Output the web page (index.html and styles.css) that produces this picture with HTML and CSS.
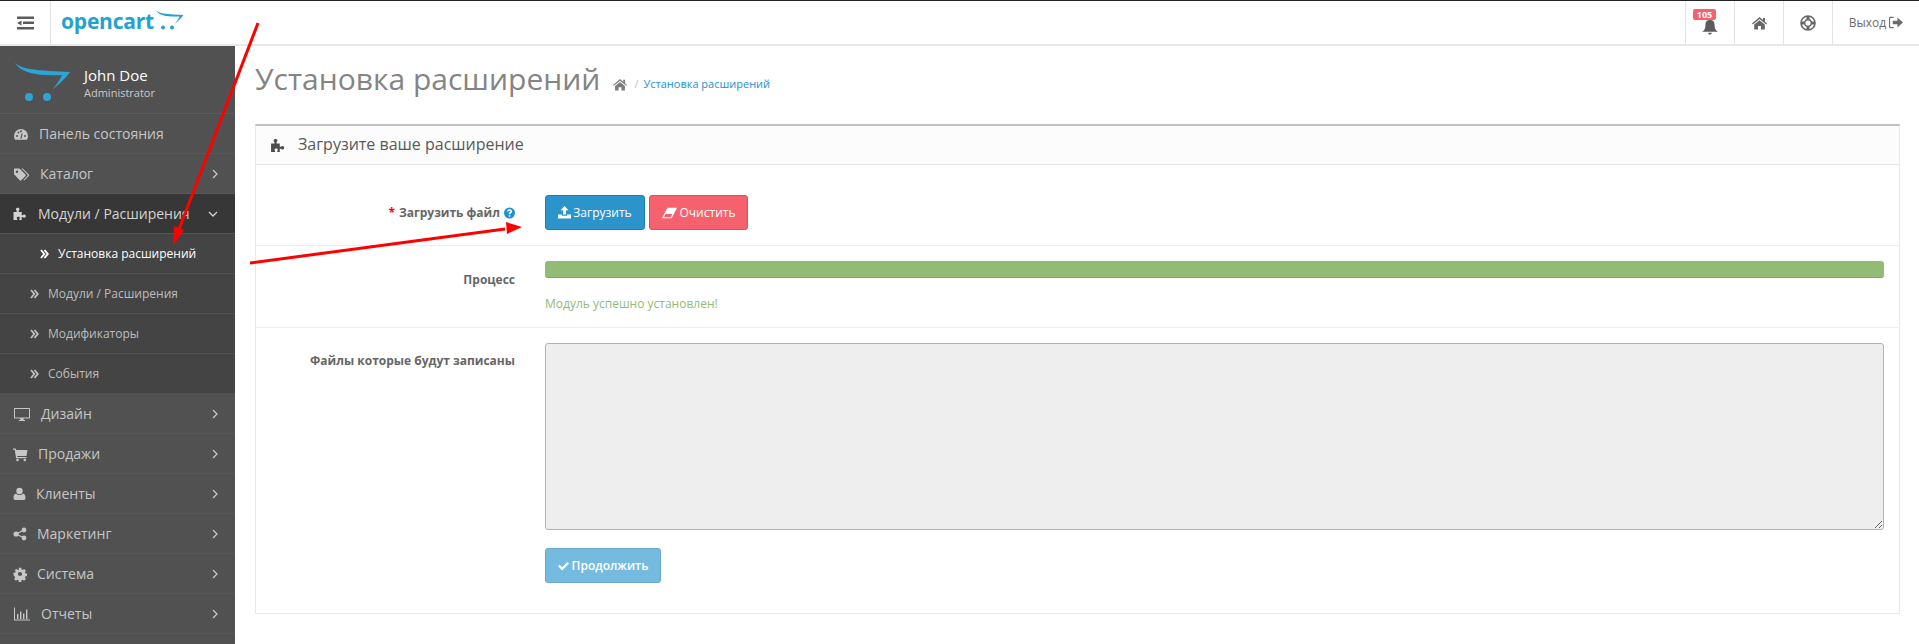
FILE: index.html
```html
<!DOCTYPE html>
<html lang="ru">
<head>
<meta charset="utf-8">
<title>Установка расширений</title>
<link rel="stylesheet" href="styles.css">
</head>
<body>
<svg class="defs" aria-hidden="true">
  <symbol id="cart-logo" viewBox="15 62 56 40"><path d="M15 63C22 69 35 70 50 71L70 72C66 78 58 85 52 90C56 85 60 80 62 75C40 76 22 74 15 63Z"/><circle cx="29" cy="97" r="4"/><circle cx="47" cy="97" r="4"/></symbol>
  <symbol id="i-dash" viewBox="0 0 14 16"><path fill-rule="evenodd" d="M7 3a7 7 0 0 0-7 7c0 1.500.4 2.800 1 3.800h12c.6-1 1-2.300 1-3.800a7 7 0 0 0-7-7zM3 9a1 1 0 1 1 0 2 1 1 0 0 1 0-2zM4.500 5.500a1 1 0 1 1 0 2 1 1 0 0 1 0-2zM7 4.300a1 1 0 1 1 0 2 1 1 0 0 1 0-2zM11 9a1 1 0 1 1 0 2 1 1 0 0 1 0-2zM6.300 12.500l1.500-5.500.8.200-1 5.300z"/></symbol>
  <symbol id="i-tags" viewBox="0 0 15 16"><path fill-rule="evenodd" d="M0 2.500h5.500l6 6c.5.500.5 1 0 1.500l-4.300 4.300c-.5.500-1 .5-1.500 0l-5.700-6zM3 4.500a1.200 1.200 0 1 0 0 2.400 1.200 1.200 0 0 0 0-2.400z"/><path d="M7.500 2.500h1.300l6 6c.5.500.5 1 0 1.500l-4.500 4.500-.9-.5 4-4c.5-.5.5-1 0-1.500z"/></symbol>
  <symbol id="i-puzzle" viewBox="0 0 14 16"><path d="M0 6h3.200V4.800C2.500 4.300 2.400 3.800 2.400 3.300c0-1 .9-1.500 1.800-1.500s1.800.5 1.800 1.500c0 .5-.2 1-.8 1.500V6h3v3.200h1c.4-.6.9-.8 1.500-.8 1 0 1.600.8 1.600 1.700s-.6 1.700-1.600 1.700c-.6 0-1.100-.2-1.500-.8h-1V14H5.800v-1c.4-.4.5-.7.5-1.100 0-.7-.7-1.100-1.500-1.100s-1.500.4-1.500 1.100c0 .4.1.7.5 1.100v1H0z"/></symbol>
  <symbol id="i-desktop" viewBox="0 0 16 16"><path fill-rule="evenodd" d="M1 2h14c.6 0 1 .4 1 1v8.500c0 .6-.4 1-1 1H9.500l.3 1.500h1.200v1H5v-1h1.200l.3-1.500H1c-.6 0-1-.4-1-1V3c0-.6.4-1 1-1zM1 3v8.500h14V3z"/></symbol>
  <symbol id="i-cart" viewBox="0 0 15 16"><path d="M0 2.500h2.800l.3 1.500h11.400l-1 6H4.200l.2 1h9v1.300H3.100L1.700 3.800H0z"/><circle cx="4.500" cy="14" r="1.300"/><circle cx="11.800" cy="14" r="1.300"/></symbol>
  <symbol id="i-user" viewBox="0 0 12 16"><circle cx="6" cy="5" r="3.200"/><path d="M0 12c0-3 1-4.300 2.500-4.300C3.500 8.500 4.700 9 6 9s2.500-.5 3.500-1.300C11 7.700 12 9 12 12c0 1.500-1 2-2 2H2c-1 0-2-.5-2-2z"/></symbol>
  <symbol id="i-share" viewBox="0 0 13 16"><circle cx="10.500" cy="4" r="2.400"/><circle cx="10.500" cy="12" r="2.400"/><circle cx="2.600" cy="8" r="2.600"/><path d="M2.600 8l8-4M2.600 8l8 4" stroke="currentColor" stroke-width="1.300" fill="none"/></symbol>
  <symbol id="i-cog" viewBox="0 0 13 16"><path fill-rule="evenodd" d="M5.200 2h2.600l.3 1.800 1 .4 1.500-1 1.800 1.800-1 1.500.4 1 1.800.3v2.600l-1.800.3-.4 1 1 1.500-1.800 1.800-1.500-1-1 .4-.3 1.800H5.200l-.3-1.800-1-.4-1.500 1-1.800-1.800 1-1.500-.4-1L0 9.600V7l1.800-.3.4-1-1-1.500L3 3.400l1.500 1 1-.4zM6.500 6.200a2.100 2.100 0 1 0 0 4.200 2.100 2.100 0 0 0 0-4.200z" transform="translate(0 -.3)"/></symbol>
  <symbol id="i-chart" viewBox="0 0 16 16"><path d="M0 1.500h1v12h15v1H0zM3 8h1.400v5H3zM6 5.500h1.400V13H6zM9 7.500h1.400V13H9zM12 3.500h1.400V13H12z"/></symbol>
  <symbol id="i-right" viewBox="0 0 6 10"><path d="M1 1l4 4-4 4" fill="none" stroke="currentColor" stroke-width="1.300"/></symbol>
  <symbol id="i-down" viewBox="0 0 10 6"><path d="M1 1l4 4 4-4" fill="none" stroke="currentColor" stroke-width="1.300"/></symbol>
  <symbol id="i-dbl" viewBox="0 0 9 10"><path d="M1 1l3.300 4L1 9M4.500 1L7.800 5 4.500 9" fill="none" stroke="currentColor" stroke-width="1.900"/></symbol>
  <symbol id="i-bars" viewBox="0 0 17 14"><path d="M0 .5h17v2.500H0zM6 5.500h11V8H6zM0 11h17v2.500H0zM4.500 4.500v5L0 7z"/></symbol>
  <symbol id="i-bell" viewBox="0 0 15 16"><path d="M7.500 1c.5 0 .9.300.9.800 2.300.4 3.400 2.100 3.400 4.700 0 3.500 1 5 3.200 6.500H0c2.200-1.500 3.200-3 3.200-6.500 0-2.600 1.100-4.300 3.400-4.700 0-.5.400-.8.900-.8zM5.800 13.800h3.400c0 1-.7 1.700-1.700 1.700s-1.700-.7-1.700-1.700z"/></symbol>
  <symbol id="i-home" viewBox="0 0 15 14"><path d="M7.500 1L11 4V2h2v3.800l2 1.700-.8.900L7.500 3 .8 8.400 0 7.500zM2.200 8.500L7.500 4.200l5.300 4.300V13.500H9V10H6v3.500H2.200z"/></symbol>
  <symbol id="i-life" viewBox="0 0 16 16"><g fill="none" stroke="currentColor"><circle cx="8" cy="8" r="7" stroke-width="1.600"/><circle cx="8" cy="8" r="3.300" stroke-width="1.400"/><path stroke-width="3" d="M8 1v3.500M8 11.500V15M1 8h3.500M11.500 8H15"/></g></symbol>
  <symbol id="i-out" viewBox="0 0 15 14"><path d="M5 1.500H2C1 1.500.5 2 .5 3v8c0 1 .5 1.500 1.500 1.500h3" fill="none" stroke="currentColor" stroke-width="1.300"/><path d="M4 5h5V1.500L15 7l-6 5.500V9H4z"/></symbol>
  <symbol id="i-help" viewBox="0 0 12 12"><path fill-rule="evenodd" d="M6 0a6 6 0 1 1 0 12A6 6 0 0 1 6 0zM5.100 8.500v1.500h1.800V8.500zM6 2C4.600 2 3.600 2.700 3.300 4l1.400.6C4.900 3.900 5.300 3.500 6 3.500c.6 0 1 .3 1 .8 0 .4-.3.700-.8 1-.7.400-1.100.9-1.100 1.700v.3h1.800c0-.5.200-.7.700-1 .8-.5 1.200-1.100 1.200-2C8.800 2.900 7.500 2 6 2z"/></symbol>
  <symbol id="i-upload" viewBox="0 0 13 13"><path d="M6.500 0l4 4.300H8v4.200H5V4.300H2.500zM0 8.500h3.800v1.300h5.400V8.500H13v4H0z"/></symbol>
  <symbol id="i-eraser" viewBox="0 0 14 11"><path fill-rule="evenodd" d="M5 .5h9L9 10.500H0zM3.100 6.500L1.900 9.500h6.300l1.500-3z"/></symbol>
  <symbol id="i-check" viewBox="0 0 12 10"><path d="M1.800 3.600L4.500 6.300 10.200.6 12 2.400 4.500 9.900 0 5.400z"/></symbol>
</svg>

<header class="topbar">
  <div class="menu-toggle"><svg class="ic-bars"><use href="#i-bars"/></svg></div>
  <a class="logo"><span class="logo-text">opencart</span><svg class="logo-cart"><use href="#cart-logo"/></svg></a>
  <nav class="top-nav">
    <a class="top-item bell-item"><svg class="ic-bell"><use href="#i-bell"/></svg><span class="badge">105</span></a>
    <a class="top-item"><svg class="ic-home"><use href="#i-home"/></svg></a>
    <a class="top-item"><svg class="ic-life"><use href="#i-life"/></svg></a>
    <a class="top-item logout">Выход<svg class="ic-out"><use href="#i-out"/></svg></a>
  </nav>
</header>

<div class="layout">
  <aside class="sidebar">
    <div class="profile">
      <svg class="profile-cart"><use href="#cart-logo"/></svg>
      <div class="profile-text"><div class="profile-name">John Doe</div><div class="profile-role">Administrator</div></div>
    </div>
    <ul class="menu">
      <li class="item"><svg class="ico w16"><use href="#i-dash"/></svg>Панель состояния</li>
      <li class="item"><svg class="ico w17"><use href="#i-tags"/></svg>Каталог<svg class="chev"><use href="#i-right"/></svg></li>
      <li class="item active"><svg class="ico w15"><use href="#i-puzzle"/></svg>Модули / Расширения<svg class="chev-down"><use href="#i-down"/></svg></li>
      <li class="sub current"><svg class="dbl"><use href="#i-dbl"/></svg>Установка расширений</li>
      <li class="sub"><svg class="dbl"><use href="#i-dbl"/></svg>Модули / Расширения</li>
      <li class="sub"><svg class="dbl"><use href="#i-dbl"/></svg>Модификаторы</li>
      <li class="sub"><svg class="dbl"><use href="#i-dbl"/></svg>События</li>
      <li class="item"><svg class="ico w18"><use href="#i-desktop"/></svg>Дизайн<svg class="chev"><use href="#i-right"/></svg></li>
      <li class="item"><svg class="ico w15"><use href="#i-cart"/></svg>Продажи<svg class="chev"><use href="#i-right"/></svg></li>
      <li class="item"><svg class="ico w13"><use href="#i-user"/></svg>Клиенты<svg class="chev"><use href="#i-right"/></svg></li>
      <li class="item"><svg class="ico w14"><use href="#i-share"/></svg>Маркетинг<svg class="chev"><use href="#i-right"/></svg></li>
      <li class="item"><svg class="ico w14"><use href="#i-cog"/></svg>Система<svg class="chev"><use href="#i-right"/></svg></li>
      <li class="item"><svg class="ico w18"><use href="#i-chart"/></svg>Отчеты<svg class="chev"><use href="#i-right"/></svg></li>
    </ul>
  </aside>

  <main class="content">
    <div class="page-header">
      <h1 class="page-title">Установка расширений</h1>
      <svg class="ic-crumb"><use href="#i-home"/></svg>
      <span class="crumb-sep">/</span>
      <a class="crumb-link">Установка расширений</a>
    </div>
    <section class="panel">
      <div class="panel-head"><svg class="ic-panel"><use href="#i-puzzle"/></svg><span class="panel-title">Загрузите ваше расширение</span></div>
      <div class="panel-body">
        <div class="row">
          <div class="label label-mid"><span class="req">*</span> Загрузить файл <svg class="ic-help"><use href="#i-help"/></svg></div>
          <div class="field btns">
            <button class="btn btn-blue"><svg class="ic-upload"><use href="#i-upload"/></svg>Загрузить</button>
            <button class="btn btn-red"><svg class="ic-eraser"><use href="#i-eraser"/></svg>Очистить</button>
          </div>
        </div>
        <div class="row">
          <div class="label label-process">Процесс</div>
          <div class="field">
            <div class="progress"></div>
            <div class="success">Модуль успешно установлен!</div>
          </div>
        </div>
        <div class="row last">
          <div class="label label-files">Файлы которые будут записаны</div>
          <div class="field">
            <textarea class="files" disabled></textarea>
            <button class="btn btn-cont"><svg class="ic-check"><use href="#i-check"/></svg>Продолжить</button>
          </div>
        </div>
      </div>
    </section>
  </main>
</div>

<svg class="arrows" viewBox="0 0 1919 644" aria-hidden="true">
  <path class="arrow-line" d="M258 23L178 232"/>
  <polygon class="arrow-head" points="173,246 174,226 184,230"/>
  <path class="arrow-line" d="M250 263L505 229"/>
  <polygon class="arrow-head" points="522,227 506,222 507,234"/>
</svg>
</body>
</html>
```
FILE: styles.css
```css
* { box-sizing: border-box; }
html, body { margin: 0; padding: 0; }
body {
  position: relative;
  width: 1919px;
  height: 644px;
  overflow: hidden;
  background: #fff;
  color: #666;
  font: 12px/18px "Open Sans", "Liberation Sans", sans-serif;
}
svg { fill: currentColor; display: block; flex: none; }
.defs { position: absolute; width: 0; height: 0; }

.topbar {
  display: flex;
  align-items: center;
  height: 46px;
  border-top: 1px solid #222;
  border-bottom: 2px solid #e8e8e8;
  background: #fff;
}
.menu-toggle {
  width: 51px;
  height: 43px;
  display: flex;
  align-items: center;
  justify-content: center;
  border-right: 1px solid #e3e3e3;
  color: #5c5c5c;
}
.ic-bars { width: 17px; height: 14px; }
.logo { display: flex; align-items: center; margin-left: 10px; color: #23a1d1; }
.logo-text { font-size: 21px; line-height: 30px; font-weight: 700; letter-spacing: -0.2px; position: relative; top: -2px; }
.logo-cart { width: 28px; height: 20px; margin: -6px 0 0 2px; }
.top-nav { display: flex; margin-left: auto; height: 43px; }
.top-item {
  display: flex;
  align-items: center;
  justify-content: center;
  width: 49px;
  border-left: 1px solid #e3e3e3;
  color: #666;
}
.bell-item { position: relative; }
.logout { width: 87px; font-size: 12px; color: #6b6b6b; }
.ic-bell { width: 16px; height: 17px; margin-top: 7px; color: #5c5c5c; }
.ic-home { width: 15px; height: 14px; }
.ic-life { width: 16px; height: 16px; }
.ic-out { width: 14px; height: 13px; margin-left: 3px; }
.badge {
  position: absolute;
  left: 7px;
  top: 8px;
  width: 23px;
  height: 11px;
  border-radius: 2px;
  background: #f5616d;
  color: #fff;
  font-size: 9px;
  line-height: 11px;
  font-weight: 700;
  text-align: center;
}

.layout { display: flex; height: 598px; }
.sidebar { width: 235px; background: #515151; flex: none; color: #c6c6c6; }
.profile {
  display: flex;
  align-items: flex-start;
  height: 68px;
  padding: 16px 0 0 15px;
  border-bottom: 1px solid #5b5b5b;
}
.profile-cart { width: 56px; height: 40px; color: #2aa5d6; }
.profile-text { margin-left: 13px; }
.profile-name { color: #fff; font-size: 15px; line-height: 20px; margin-top: 3px; }
.profile-role { color: #c9c9c9; font-size: 11px; line-height: 13px; margin-top: 1px; }
.menu { list-style: none; margin: 0; padding: 0; }
.item, .sub {
  display: flex;
  align-items: center;
  height: 40px;
  border-bottom: 1px solid #585858;
  font-size: 14px;
}
.item { padding-left: 13px; }
.ico { height: 16px; margin-right: 10px; }
.w13 { width: 13px; } .w14 { width: 14px; } .w15 { width: 15px; }
.w16 { width: 16px; } .w17 { width: 17px; } .w18 { width: 18px; }
.chev { width: 6px; height: 10px; margin-left: auto; margin-right: 17px; }
.chev-down { width: 10px; height: 6px; margin-left: auto; margin-right: 17px; }
.active { background: #373737; color: #d4d4d4; border-bottom-color: #555; }
.sub {
  background: #444;
  border-bottom-color: #505050;
  font-size: 12px;
  padding-left: 30px;
  color: #bdbdbd;
}
.dbl { width: 9px; height: 10px; margin-right: 9px; }
.current { color: #fff; font-weight: 500; padding-left: 40px; }

.content { flex: 1; padding: 0 19px 0 20px; min-width: 0; }
.page-header { display: flex; align-items: flex-start; height: 78px; padding-top: 13px; }
.page-title { margin: 0; font-size: 30px; line-height: 40px; font-weight: 400; color: #848484; }
.ic-crumb { width: 14px; height: 13px; margin: 19px 0 0 13px; color: #7c7c7c; }
.crumb-sep { margin: 16px 0 0 7px; font-size: 11px; color: #bbb; }
.crumb-link { margin: 16px 0 0 5px; font-size: 11px; color: #1e91cf; }

.panel {
  border: 1px solid #e8e8e8;
  border-top: 2px solid #bfbfbf;
  height: 490px;
}
.panel-head {
  display: flex;
  align-items: center;
  height: 39px;
  padding-left: 15px;
  background: #fcfcfc;
  border-bottom: 1px solid #e8e8e8;
  color: #595959;
}
.panel-title { font-size: 16px; line-height: 20px; position: relative; top: -1px; }
.ic-panel { width: 15px; height: 17px; margin-right: 12px; color: #4d4d4d; }
.row { display: flex; gap: 30px; padding: 30px 15px 15px 0; border-bottom: 1px solid #eee; }
.row + .row { padding-top: 15px; }
.row.last { border-bottom: 0; }
.label { width: 259px; flex: none; text-align: right; font-weight: 700; color: #666; }
.label-mid { display: flex; align-items: center; justify-content: flex-end; gap: 4px; height: 35px; }
.label-process { padding-top: 10px; }
.label-files { padding-top: 9px; }
.req { color: #f00; }
.ic-help { width: 11px; height: 12px; color: #1e91cf; }
.field { flex: 1; min-width: 0; }
.btns { display: flex; gap: 4px; }
.btn {
  display: flex;
  align-items: center;
  justify-content: center;
  height: 35px;
  padding: 0;
  border-radius: 3px;
  border: 1px solid;
  color: #fff;
  font: 12px/18px "Open Sans", "Liberation Sans", sans-serif;
}
.btn-blue { width: 100px; background: #2b94cb; border-color: #1f7fb3; }
.btn-red { width: 99px; background: #f5616d; border-color: #e04f58; }
.btn-cont { width: 116px; margin-top: 18px; background: #75bbdf; border-color: #6aa9cb; font-weight: 600; }
.ic-upload { width: 13px; height: 13px; margin-right: 2px; }
.ic-eraser { width: 15px; height: 12px; margin-right: 3px; }
.ic-check { width: 11px; height: 10px; margin-right: 3px; }
.progress { height: 17px; background: #92bb74; border-radius: 3px; border-bottom: 1px solid #7fa65f; }
.success { margin-top: 17px; height: 17px; color: #92bb74; font-size: 12px; }
.files {
  display: block;
  width: 100%;
  height: 187px;
  background: #eee;
  border: 1px solid #b3b3b3;
  border-radius: 3px;
  resize: both;
  margin: 0;
}

.arrows { position: absolute; left: 0; top: 0; width: 1919px; height: 644px; pointer-events: none; }
.arrow-line { stroke: #f00; stroke-width: 3; fill: none; }
.arrow-head { fill: #f00; }
```
